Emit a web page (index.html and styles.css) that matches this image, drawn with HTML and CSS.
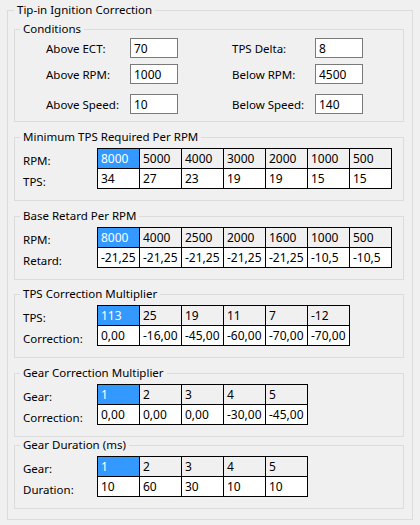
FILE: index.html
```html
<!DOCTYPE html>
<html>
<head>
<meta charset="utf-8">
<link rel="stylesheet" href="styles.css">
</head>
<body>
<section class="group outer">
  <h1 class="group-title">Tip-in Ignition Correction</h1>

  <section class="group inner cond">
    <h2 class="group-title">Conditions</h2>
    <div class="cond-row">
      <label>Above ECT:</label><input class="field" value="70"><span></span>
      <label>TPS Delta:</label><input class="field" value="8">
    </div>
    <div class="cond-row">
      <label>Above RPM:</label><input class="field" value="1000"><span></span>
      <label>Below RPM:</label><input class="field" value="4500">
    </div>
    <div class="cond-row spaced">
      <label>Above Speed:</label><input class="field" value="10"><span></span>
      <label>Below Speed:</label><input class="field" value="140">
    </div>
  </section>

  <section class="group inner sp15">
    <h2 class="group-title">Minimum TPS Required Per RPM</h2>
    <table class="grid">
      <tr class="head"><td class="lbl">RPM:</td><td class="c sel">8000</td><td class="c">5000</td><td class="c">4000</td><td class="c">3000</td><td class="c">2000</td><td class="c">1000</td><td class="c">500</td></tr>
      <tr><td class="lbl">TPS:</td><td class="c">34</td><td class="c">27</td><td class="c">23</td><td class="c">19</td><td class="c">19</td><td class="c">15</td><td class="c">15</td></tr>
    </table>
  </section>

  <section class="group inner sp15">
    <h2 class="group-title">Base Retard Per RPM</h2>
    <table class="grid">
      <tr class="head"><td class="lbl">RPM:</td><td class="c sel">8000</td><td class="c">4000</td><td class="c">2500</td><td class="c">2000</td><td class="c">1600</td><td class="c">1000</td><td class="c">500</td></tr>
      <tr><td class="lbl">Retard:</td><td class="c">-21,25</td><td class="c">-21,25</td><td class="c">-21,25</td><td class="c">-21,25</td><td class="c">-21,25</td><td class="c">-10,5</td><td class="c">-10,5</td></tr>
    </table>
  </section>

  <section class="group inner sp14">
    <h2 class="group-title">TPS Correction Multiplier</h2>
    <table class="grid">
      <tr class="head"><td class="lbl">TPS:</td><td class="c sel">113</td><td class="c">25</td><td class="c">19</td><td class="c">11</td><td class="c">7</td><td class="c">-12</td></tr>
      <tr><td class="lbl">Correction:</td><td class="c">0,00</td><td class="c">-16,00</td><td class="c">-45,00</td><td class="c">-60,00</td><td class="c">-70,00</td><td class="c">-70,00</td></tr>
    </table>
  </section>

  <section class="group inner sp15">
    <h2 class="group-title">Gear Correction Multiplier</h2>
    <table class="grid">
      <tr class="head"><td class="lbl">Gear:</td><td class="c sel">1</td><td class="c">2</td><td class="c">3</td><td class="c">4</td><td class="c">5</td></tr>
      <tr><td class="lbl">Correction:</td><td class="c">0,00</td><td class="c">0,00</td><td class="c">0,00</td><td class="c">-30,00</td><td class="c">-45,00</td></tr>
    </table>
  </section>

  <section class="group inner sp8">
    <h2 class="group-title">Gear Duration (ms)</h2>
    <table class="grid">
      <tr class="head"><td class="lbl">Gear:</td><td class="c sel">1</td><td class="c">2</td><td class="c">3</td><td class="c">4</td><td class="c">5</td></tr>
      <tr><td class="lbl">Duration:</td><td class="c">10</td><td class="c">60</td><td class="c">30</td><td class="c">10</td><td class="c">10</td></tr>
    </table>
  </section>
</section>
</body>
</html>
```

FILE: styles.css
```css
html, body {
  margin: 0;
  padding: 0;
  background: #f0f0f0;
}
body {
  font-family: "Noto Sans", "Open Sans", sans-serif;
  font-size: 11.5px;
  color: #000;
}
.group {
  border: 1px solid #dcdcdc;
}
.group-title {
  display: table;
  margin: -8px 0 0 0;
  padding: 0 3px;
  height: 14px;
  line-height: 14px;
  font-size: 11.5px;
  font-weight: normal;
  white-space: nowrap;
  background: #f0f0f0;
}
.outer {
  box-sizing: border-box;
  width: 406px;
  margin: 10px 0 0 7px;
  padding: 0 8px 10px 6px;
}
.inner {
  padding: 0 8px 11px 8px;
}
.inner > .group-title {
  margin-left: -3px;
}
.cond {
  margin-top: 12px;
  padding-bottom: 7px;
}
.sp15 { margin-top: 15px; }
.sp14 { margin-top: 14px; }
.sp8 { margin-top: 8px; }

.cond-row {
  display: grid;
  grid-template-columns: 84px 48px 54px 83px 48px;
  align-items: center;
  height: 20px;
  margin-left: 23px;
  white-space: nowrap;
}
.group-title + .cond-row {
  margin-top: 2px;
}
.cond-row + .cond-row {
  margin-top: 6px;
}
.cond-row.spaced {
  margin-top: 10px;
}
.field {
  box-sizing: border-box;
  width: 48px;
  height: 20px;
  margin: 0;
  padding: 0 0 0 3px;
  border: 1px solid #7a7a7a;
  border-radius: 0;
  background: #fff;
  font-family: inherit;
  font-size: 12px;
  color: #000;
  outline: none;
}
table.grid {
  margin-top: 4px;
  border-collapse: separate;
  border-spacing: 0;
}
table.grid td {
  padding: 0;
  vertical-align: middle;
}
table.grid td.lbl {
  width: 74px;
  padding-top: 4px;
  white-space: nowrap;
}
table.grid td.c {
  box-sizing: border-box;
  width: 42px;
  height: 20px;
  padding: 0 0 0 3px;
  border-right: 1px solid #000;
  border-bottom: 1px solid #000;
  background: #fff;
  font-size: 12px;
  white-space: nowrap;
}
table.grid tr.head td.c {
  height: 21px;
  border-top: 1px solid #000;
  background: #f0f0f0;
}
table.grid td.lbl + td.c {
  width: 43px;
  border-left: 1px solid #000;
}
table.grid tr.head td.sel {
  background: #3399ff;
  color: #fff;
}
```
